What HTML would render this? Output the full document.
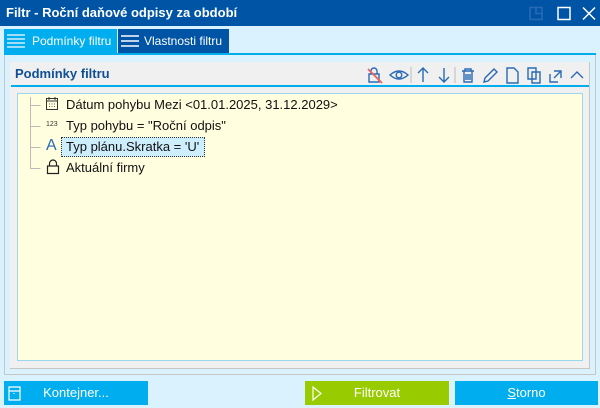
<!DOCTYPE html>
<html><head><meta charset="utf-8"><style>
*{margin:0;padding:0;box-sizing:border-box}
body{width:600px;height:408px;background:#d9f2fe;font-family:"Liberation Sans",sans-serif;position:relative;overflow:hidden}
.abs{position:absolute}
.title{left:0;top:0;width:600px;height:26px;background:#0054a6;color:#fff;font-weight:bold;font-size:13px;line-height:26px;padding-left:6px}
.tab{top:29px;height:25px;color:#fff;font-size:12px;line-height:25px}
.row{left:66px;font-size:13px;color:#111;height:18px;line-height:18px}
.btn{top:381px;height:24px;color:#fff;font-size:13px;line-height:24px;text-align:center}
.ic{top:66px}
</style></head><body>
<div class="abs title">Filtr - Roční daňové odpisy za období</div>
<svg class="abs" style="left:528px;top:6px" width="70" height="16" viewBox="0 0 70 16" fill="none" stroke="#fff" stroke-width="1.5">
<rect x="2" y="1.5" width="12" height="12" stroke="#2a6ab5"/><path d="M8 1.5v6h6" stroke="#2a6ab5"/>
<rect x="30" y="1.5" width="12" height="12"/>
<path d="M55 1.5l12 12M67 1.5l-12 12"/></svg>
<div class="abs" style="left:4px;top:53px;width:592px;height:2px;background:#00aeef"></div>
<div class="abs tab" style="left:4px;width:113px;background:#00aeef;padding-left:28px">Podmínky filtru</div>
<svg class="abs" style="left:7px;top:33px" width="18" height="16" stroke="#9fdcf7" stroke-width="2"><path d="M0 2h18M0 6h18M0 10h18M0 14h18"/></svg>
<div class="abs tab" style="left:118px;width:111px;height:24px;background:#0054a6;padding-left:26px">Vlastnosti filtru</div>
<svg class="abs" style="left:121px;top:34px" width="18" height="14" stroke="#fff" stroke-width="1.6"><path d="M0 2h18M0 7h18M0 12h18"/></svg>
<div class="abs" style="left:4px;top:55px;width:592px;height:320px;border:1px solid #c6c6c6;border-top:none"></div>
<div class="abs" style="left:10px;top:62px;width:580px;height:307px;background:#f0f0f0;border-right:1px solid #c6c6c6;border-bottom:1px solid #c6c6c6"></div>
<div class="abs" style="left:15px;top:66px;font-weight:bold;color:#0e4f97;font-size:13px">Podmínky filtru</div>
<div class="abs" style="left:11px;top:85px;width:578px;height:2px;background:#00aeef"></div>
<svg class="abs ic" style="left:364px" width="226" height="18" fill="none" stroke="#2a6ab5" stroke-width="1.4">
<path d="M7 8v-3a3 3 0 0 1 6 0v3M5 8h10v8h-10z"/><path d="M4 3l14 14" stroke="#f06060" stroke-width="1.8"/>
<path d="M26 9q9-8 18 0q-9 8-18 0z"/><circle cx="35" cy="9" r="2.8"/>
<path d="M47 1v16" stroke="#bbb" stroke-width="1"/>
<path d="M59 16v-13M54 7l5-5 5 5"/>
<path d="M80 2v13M75 11l5 5 5-5"/>
<path d="M91 1v16" stroke="#bbb" stroke-width="1"/>
<path d="M98 5h12M101 5v-2h6v2M100 5v11h8v-11M102 8v6M104 8v6M106 8v6"/>
<path d="M120 16l1-4 9-9 3 3-9 9z"/>
<path d="M143 2h7l4 4v11h-11z"/>
<path d="M164 2h8v11h-8zM168 6h8v11h-8z"/>
<path d="M186 8v8h8M190 5h7v7M197 5l-7 7"/>
<path d="M207 12l6-6 6 6"/></svg>
<div class="abs" style="left:17px;top:93px;width:566px;height:268px;background:#ffffe0;border:1px solid #9ad8f0"></div>
<svg class="abs" style="left:28px;top:97px" width="20" height="80" stroke="#bbb" stroke-width="1"><path d="M2.5 0v72M2.5 8.5h10M2.5 29.5h10M2.5 50.5h10M2.5 71.5h10"/></svg>
<svg class="abs" style="left:45px;top:97px" width="14" height="14" fill="none" stroke="#333" stroke-width="1"><rect x="1.5" y="1.5" width="11" height="11"/><path d="M1.5 4h11M4 0v3M10 0v3"/><path d="M4 7h1M6.5 7h1M9 7h1M4 9.5h1M6.5 9.5h1M9 9.5h1" stroke="#666"/></svg>
<div class="abs row" style="top:96px">Dátum pohybu Mezi &lt;01.01.2025, 31.12.2029&gt;</div>
<div class="abs" style="left:46px;top:121px;font-size:7px;color:#333">123</div>
<div class="abs row" style="top:117px">Typ pohybu = "Roční odpis"</div>
<div class="abs" style="left:46px;top:137px;font-size:16px;color:#2a6ab5">A</div>
<div class="abs" style="left:61px;top:137px;width:144px;height:20px;background:#cdeefc;border:1px dotted #333"></div>
<div class="abs row" style="top:138px">Typ plánu.Skratka = 'U'</div>
<svg class="abs" style="left:46px;top:159px" width="14" height="16" fill="none" stroke="#222" stroke-width="1.2"><path d="M3.5 7v-2.5a3.5 3.5 0 0 1 7 0v2.5M1.5 7h11v7.5h-11z"/></svg>
<div class="abs row" style="top:159px">Aktuální firmy</div>
<div class="abs btn" style="left:4px;width:144px;background:#00aeef">Kontejner...</div>
<svg class="abs" style="left:7px;top:385px" width="16" height="17" fill="none" stroke="#fff" stroke-width="1.2"><path d="M2 2h11v13h-11zM2 6h11M7 8v1"/></svg>
<div class="abs btn" style="left:305px;width:144px;background:#99cc00">Filtrovat</div>
<svg class="abs" style="left:311px;top:386px" width="12" height="15" fill="none" stroke="#fff" stroke-width="1.2"><path d="M2 1v13l8-6.5z"/></svg>
<div class="abs btn" style="left:455px;width:143px;background:#00aeef"><u>S</u>torno</div>
</body></html>
